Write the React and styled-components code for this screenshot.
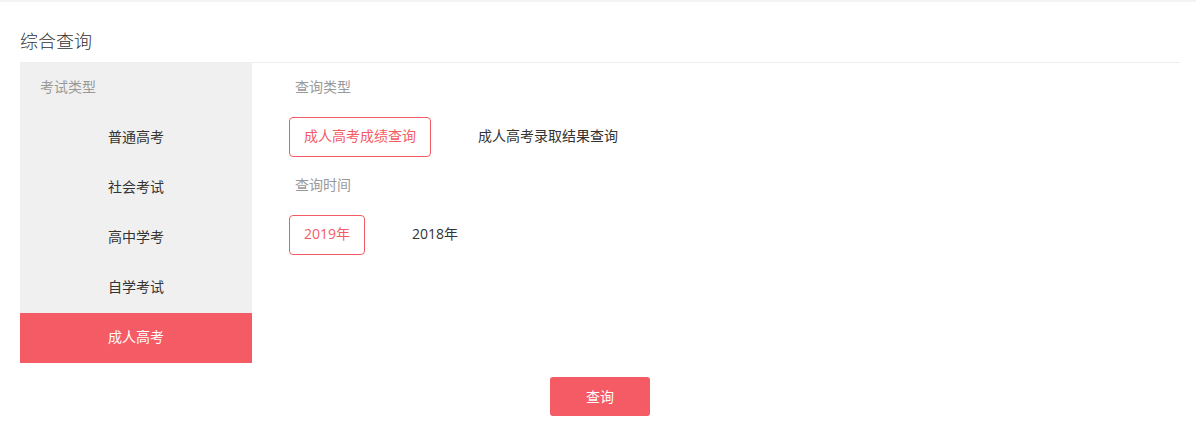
import React, { useState } from 'react';
import styled, { createGlobalStyle } from 'styled-components';

const RED = '#f55b65';

const GlobalStyle = createGlobalStyle`
  * { box-sizing: border-box; }
  body {
    margin: 0;
    background: #fff;
    font-family: "Open Sans", "Noto Sans CJK SC", "Noto Sans", sans-serif;
    color: #333;
  }
`;

const examTypes = ['普通高考', '社会考试', '高中学考', '自学考试', '成人高考'];
const queryTypes = ['成人高考成绩查询', '成人高考录取结果查询'];
const years = ['2019年', '2018年'];

export default function App() {
  const [exam, setExam] = useState(4);
  const [query, setQuery] = useState(0);
  const [year, setYear] = useState(0);

  return (
    <>
      <GlobalStyle />
      <TopBar />
      <Page>
        <Title>综合查询</Title>
        <Body>
          <Sidebar>
            <SideHeader>考试类型</SideHeader>
            {examTypes.map((name, i) => (
              <SideItem key={name} $active={i === exam} onClick={() => setExam(i)}>
                {name}
              </SideItem>
            ))}
          </Sidebar>
          <Panel>
            <Label>查询类型</Label>
            <OptionRow>
              {queryTypes.map((name, i) => (
                <Option key={name} $active={i === query} onClick={() => setQuery(i)}>
                  {name}
                </Option>
              ))}
            </OptionRow>
            <Label>查询时间</Label>
            <OptionRow>
              {years.map((name, i) => (
                <Option key={name} $active={i === year} onClick={() => setYear(i)}>
                  {name}
                </Option>
              ))}
            </OptionRow>
          </Panel>
        </Body>
        <Footer>
          <SubmitButton>查询</SubmitButton>
        </Footer>
      </Page>
    </>
  );
}

const TopBar = styled.div`
  height: 2px;
  background: #f4f4f4;
`;

const Page = styled.div`
  width: 1160px;
  margin: 0 20px;
`;

const Title = styled.h2`
  margin: 0;
  padding: 27px 0 9px;
  font-size: 18px;
  font-weight: 300;
  line-height: 24px;
  color: #333;
  border-bottom: 1px solid #eee;
`;

const Body = styled.div`
  display: flex;
`;

const Sidebar = styled.ul`
  width: 232px;
  margin: 0;
  padding: 0;
  list-style: none;
  background: #f0f0f0;
`;

const SideHeader = styled.li`
  height: 50px;
  line-height: 48px;
  padding: 0 0 2px 20px;
  font-size: 14px;
  color: #999;
`;

const SideItem = styled.li`
  height: 50px;
  line-height: 48px;
  padding-bottom: 2px;
  text-align: center;
  font-size: 14px;
  cursor: pointer;
  color: ${(p) => (p.$active ? '#fff' : '#333')};
  background: ${(p) => (p.$active ? RED : 'transparent')};
`;

const Panel = styled.div`
  flex: 1;
  padding-left: 37px;
`;

const Label = styled.div`
  height: 50px;
  line-height: 48px;
  padding: 0 0 2px 6px;
  font-size: 14px;
  color: #999;
`;

const OptionRow = styled.div`
  display: flex;
  gap: 32px;
  margin: 4px 0;
`;

const Option = styled.div`
  height: 40px;
  line-height: 36px;
  padding: 0 14px 2px;
  font-size: 14px;
  border-radius: 4px;
  cursor: pointer;
  border: 1px solid ${(p) => (p.$active ? RED : 'transparent')};
  color: ${(p) => (p.$active ? RED : '#333')};
`;

const Footer = styled.div`
  display: flex;
  justify-content: center;
  padding-top: 14px;
`;

const SubmitButton = styled.button`
  width: 100px;
  height: 39px;
  padding: 0 0 2px;
  border: none;
  border-radius: 3px;
  background: ${RED};
  color: #fff;
  font-family: inherit;
  font-size: 14px;
  cursor: pointer;
`;
